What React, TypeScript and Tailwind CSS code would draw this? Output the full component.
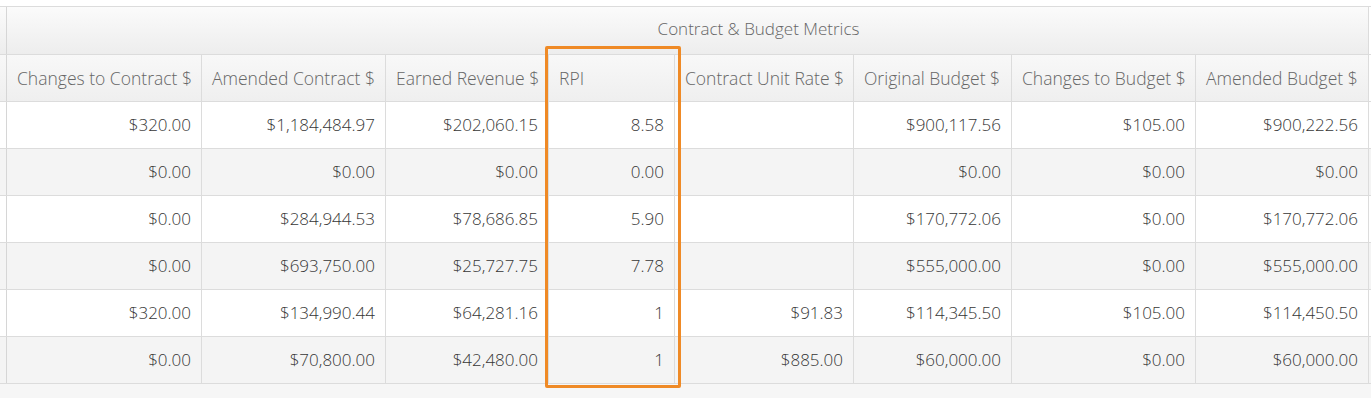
const columns = [
  { label: "Changes to Contract $", width: 195 },
  { label: "Amended Contract $", width: 184 },
  { label: "Earned Revenue $", width: 163 },
  { label: "RPI", width: 126 },
  { label: "Contract Unit Rate $", width: 179 },
  { label: "Original Budget $", width: 158 },
  { label: "Changes to Budget $", width: 184 },
  { label: "Amended Budget $", width: 173 },
];

const rows: string[][] = [
  ["$320.00", "$1,184,484.97", "$202,060.15", "8.58", "", "$900,117.56", "$105.00", "$900,222.56"],
  ["$0.00", "$0.00", "$0.00", "0.00", "", "$0.00", "$0.00", "$0.00"],
  ["$0.00", "$284,944.53", "$78,686.85", "5.90", "", "$170,772.06", "$0.00", "$170,772.06"],
  ["$0.00", "$693,750.00", "$25,727.75", "7.78", "", "$555,000.00", "$0.00", "$555,000.00"],
  ["$320.00", "$134,990.44", "$64,281.16", "1", "$91.83", "$114,345.50", "$105.00", "$114,450.50"],
  ["$0.00", "$70,800.00", "$42,480.00", "1", "$885.00", "$60,000.00", "$0.00", "$60,000.00"],
];

export default function App() {
  return (
    <div
      className="relative w-[1371px] h-[398px] overflow-hidden bg-white text-[17px] font-light"
      style={{ fontFamily: '"Open Sans", "Liberation Sans", sans-serif' }}
    >
      <div className="mt-[6px] border-t border-[#dcdcdc]">
        {/* group header */}
        <div className="flex h-[48px] border-b border-[#dcdcdc]">
          <div className="w-[7px] shrink-0 border-r border-[#d6d6d6] bg-gradient-to-b from-[#fbfbfb] to-[#ededed]" />
          <div className="w-[1362px] shrink-0 border-r border-[#dcdcdc] bg-gradient-to-b from-[#fbfbfb] to-[#ededed] flex items-center justify-center pl-[142px] pb-[3px] text-[#666]">
            Contract &amp; Budget Metrics
          </div>
        </div>

        {/* column headers */}
        <div className="flex h-[47px] border-b border-[#dcdcdc]">
          <div className="w-[7px] shrink-0 border-r border-[#d6d6d6] bg-gradient-to-b from-[#f8f8f8] to-[#efefef]" />
          {columns.map((c) => (
            <div
              key={c.label}
              style={{ width: c.width }}
              className="shrink-0 border-r border-[#dcdcdc] bg-gradient-to-b from-[#f8f8f8] to-[#efefef] flex items-center px-[10px] text-[17.5px] text-[#666] whitespace-nowrap"
            >
              {c.label}
            </div>
          ))}
        </div>

        {/* body */}
        {rows.map((r, i) => (
          <div
            key={i}
            className={`flex h-[47px] border-b border-[#dcdcdc] ${i % 2 === 1 ? "bg-[#f4f4f4]" : "bg-white"}`}
          >
            <div className="w-[7px] shrink-0 border-r border-[#d6d6d6]" />
            {r.map((v, j) => (
              <div
                key={j}
                style={{ width: columns[j].width }}
                className="shrink-0 border-r border-[#dcdcdc] flex items-center justify-end px-[10px] text-[#363636] whitespace-nowrap"
              >
                {v}
              </div>
            ))}
          </div>
        ))}
      </div>
      <div className="h-[14px] bg-[#f6f6f6]" />

      {/* highlight around RPI */}
      <div className="absolute left-[545px] top-[46px] w-[136px] h-[342px] border-[3px] border-[#ef8a26] rounded-[2px] pointer-events-none" />
    </div>
  );
}
